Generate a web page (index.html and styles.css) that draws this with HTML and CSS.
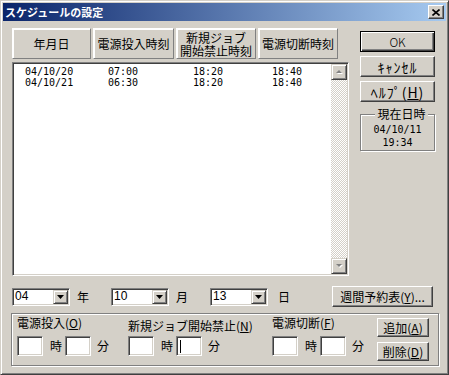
FILE: index.html
```html
<!DOCTYPE html>
<html>

<head>
    <meta charset="utf-8">
    <link rel="stylesheet" href="styles.css">
    <title>スケジュールの設定</title>
</head>

<body>
    <div class="window">
        <div class="titlebar">
            <span class="title">スケジュールの設定</span>
            <div class="close-btn">
                <svg width="8" height="7" viewBox="0 0 8 7">
                    <path d="M0.5 0.5 L7.5 6.5 M7.5 0.5 L0.5 6.5" stroke="#000" stroke-width="1.6" fill="none"/>
                </svg>
            </div>
        </div>

        <div class="dialog">
            <div class="top">
                <div class="left-col">
                    <div class="header">
                        <div class="col-head w1">年月日</div>
                        <div class="col-head w2">電源投入時刻</div>
                        <div class="col-head w3"><span class="head-line">新規ジョブ</span><span class="head-line">開始禁止時刻</span></div>
                        <div class="col-head w4">電源切断時刻</div>
                    </div>

                    <div class="listbox">
                        <div class="rows">
                            <div class="row"><span>04/10/20</span><span>07:00</span><span>18:20</span><span>18:40</span></div>
                            <div class="row"><span>04/10/21</span><span>06:30</span><span>18:20</span><span>18:40</span></div>
                        </div>
                        <div class="scrollbar">
                            <div class="sb-btn">
                                <svg width="9" height="6" viewBox="0 0 9 6">
                                    <polygon points="2,5 5,2 8,5" fill="#fff"/>
                                    <polygon points="1,4 4,1 7,4" fill="#808080"/>
                                </svg>
                            </div>
                            <div class="sb-track"></div>
                            <div class="sb-btn">
                                <svg width="9" height="6" viewBox="0 0 9 6">
                                    <polygon points="2,2 8,2 5,5" fill="#fff"/>
                                    <polygon points="1,1 7,1 4,4" fill="#808080"/>
                                </svg>
                            </div>
                        </div>
                    </div>
                </div>

                <div class="right-col">
                    <div class="btn btn-default">OK</div>
                    <div class="btn kana">ｷｬﾝｾﾙ</div>
                    <div class="btn kana">ﾍﾙﾌﾟ(<u>H</u>)</div>
                    <fieldset class="now-box">
                        <legend>現在日時</legend>
                        <div class="now-text">04/10/11</div>
                        <div class="now-text">19:34</div>
                    </fieldset>
                </div>
            </div>

            <div class="date-row">
                <div class="date-field">
                    <div class="combo"><span class="combo-value">04</span><div class="combo-btn"><svg width="7" height="4" viewBox="0 0 7 4"><polygon points="0,0 7,0 3.5,4" fill="#000"/></svg></div></div>
                    <span class="date-label">年</span>
                </div>
                <div class="date-field">
                    <div class="combo"><span class="combo-value">10</span><div class="combo-btn"><svg width="7" height="4" viewBox="0 0 7 4"><polygon points="0,0 7,0 3.5,4" fill="#000"/></svg></div></div>
                    <span class="date-label">月</span>
                </div>
                <div class="date-field">
                    <div class="combo"><span class="combo-value">13</span><div class="combo-btn"><svg width="7" height="4" viewBox="0 0 7 4"><polygon points="0,0 7,0 3.5,4" fill="#000"/></svg></div></div>
                    <span class="date-label day">日</span>
                </div>
                <div class="btn btn-week">週間予約表(<u>Y</u>)...</div>
            </div>

            <div class="entry-group">
                <div class="entry s1">
                    <div class="entry-label">電源投入(<u>O</u>)</div>
                    <div class="time-row">
                        <div class="field"></div><span class="unit-h">時</span><div class="field"></div><span class="unit-m">分</span>
                    </div>
                </div>
                <div class="entry s2">
                    <div class="entry-label low">新規ジョブ開始禁止(<u>N</u>)</div>
                    <div class="time-row">
                        <div class="field"></div><span class="unit-h">時</span><div class="field"><span class="caret"></span></div><span class="unit-m">分</span>
                    </div>
                </div>
                <div class="entry s3">
                    <div class="entry-label">電源切断(<u>F</u>)</div>
                    <div class="time-row">
                        <div class="field"></div><span class="unit-h">時</span><div class="field"></div><span class="unit-m">分</span>
                    </div>
                </div>
                <div class="entry-buttons">
                    <div class="btn btn-small">追加(<u>A</u>)</div>
                    <div class="btn btn-small">削除(<u>D</u>)</div>
                </div>
            </div>
        </div>
    </div>
</body>

</html>
```

FILE: styles.css
```css
body {
    margin: 0;
    padding: 0;
    font-family: "Noto Sans CJK JP", sans-serif;
    font-size: 12px;
    line-height: 12px;
    color: #000;
    background-color: #d4d0c8;
}

.window {
    width: 449px;
    height: 375px;
    box-sizing: border-box;
    border: 1px solid;
    border-color: #d4d0c8 #404040 #404040 #d4d0c8;
    box-shadow: inset 1px 1px #fff, inset -1px -1px #808080;
    padding: 2px;
    background-color: #d4d0c8;
}

/* title bar */
.titlebar {
    height: 18px;
    display: flex;
    align-items: center;
    padding: 0 2px;
    background: linear-gradient(to right, #0a246a, #a6caf0);
}

.title {
    flex: 1;
    color: #fff;
    font-weight: bold;
    font-size: 11px;
    line-height: 12px;
}

.close-btn {
    width: 16px;
    height: 14px;
    box-sizing: border-box;
    display: flex;
    align-items: center;
    justify-content: center;
    background-color: #d4d0c8;
    border: 1px solid;
    border-color: #fff #404040 #404040 #fff;
    box-shadow: inset -1px -1px #808080;
}

.dialog {
    padding: 7px 0 0 9px;
}

.top {
    display: flex;
}

.left-col {
    width: 337px;
}

/* column headers */
.header {
    display: flex;
    gap: 2px;
    height: 31px;
}

.col-head {
    box-sizing: border-box;
    height: 31px;
    display: flex;
    flex-direction: column;
    align-items: center;
    justify-content: center;
    text-align: center;
    border: 1px solid;
    border-color: #fff #808080 #808080 #fff;
    box-shadow: inset 1px 1px #fff;
}

.head-line {
    display: block;
    height: 13px;
    line-height: 13px;
}

.w1 { width: 79px; }
.w2 { width: 81px; }
.w3 { width: 80px; }
.w4 { width: 80px; }

/* list */
.listbox {
    margin-top: 3px;
    height: 214px;
    box-sizing: border-box;
    display: flex;
    background-color: #fff;
    border: 1px solid;
    border-color: #808080 #fff #fff #808080;
    box-shadow: inset 1px 1px #404040, inset -1px -1px #d4d0c8;
    padding: 1px;
}

.rows {
    flex: 1;
    padding: 2px 0 0 11px;
    font-family: "DejaVu Sans Mono", monospace;
    font-size: 10px;
    line-height: 11px;
}

.row {
    display: grid;
    grid-template-columns: 83px 85px 79px auto;
}

.scrollbar {
    width: 16px;
    display: flex;
    flex-direction: column;
}

.sb-btn {
    width: 16px;
    height: 16px;
    box-sizing: border-box;
    display: flex;
    align-items: center;
    justify-content: center;
    background-color: #d4d0c8;
    border: 1px solid;
    border-color: #d4d0c8 #404040 #404040 #d4d0c8;
    box-shadow: inset 1px 1px #fff, inset -1px -1px #808080;
}

.sb-track {
    flex: 1;
    background: repeating-conic-gradient(#fff 0 25%, #d4d0c8 0 50%) 0 0 / 2px 2px;
}

/* right buttons */
.right-col {
    width: 75px;
    margin-left: 11px;
    padding-top: 3px;
}

.btn {
    box-sizing: border-box;
    height: 21px;
    display: flex;
    align-items: center;
    justify-content: center;
    white-space: nowrap;
    border: 1px solid;
    border-color: #fff #404040 #404040 #fff;
    box-shadow: inset -1px -1px #808080;
    margin-bottom: 4px;
}

.btn-default {
    font-weight: 300;
    border-color: #000;
    box-shadow: inset 1px 1px #fff, inset -1px -1px #404040, inset -2px -2px #808080;
}

.btn.kana {
    font-size: 14px;
    letter-spacing: 1px;
}

.now-box {
    margin: 6px 0 0 0;
    padding: 3px 0 1px 0;
    min-width: 0;
    border: 1px solid #808080;
    box-shadow: inset 1px 1px #fff, 1px 1px #fff;
    text-align: center;
}

.now-box legend {
    margin-left: 4px;
    padding: 0 2px;
    background-color: #d4d0c8;
    line-height: 12px;
}

.now-text {
    font-family: "DejaVu Sans Mono", monospace;
    font-size: 10px;
    line-height: 13px;
}

/* date selectors */
.date-row {
    width: 421px;
    height: 21px;
    margin-top: 10px;
    display: flex;
    align-items: center;
}

.date-field {
    width: 99px;
    display: flex;
    align-items: center;
}

.combo {
    width: 58px;
    height: 18px;
    box-sizing: border-box;
    display: flex;
    align-items: center;
    background-color: #fff;
    border: 1px solid;
    border-color: #808080 #fff #fff #808080;
    box-shadow: inset 1px 1px #404040, inset -1px -1px #d4d0c8;
    padding: 1px;
}

.combo-value {
    flex: 1;
    padding-left: 1px;
    margin-top: -2px;
    font-family: "Liberation Sans", sans-serif;
}

.combo-btn {
    width: 15px;
    height: 14px;
    box-sizing: border-box;
    display: flex;
    align-items: center;
    justify-content: center;
    background-color: #d4d0c8;
    border: 1px solid;
    border-color: #d4d0c8 #404040 #404040 #d4d0c8;
    box-shadow: inset 1px 1px #fff, inset -1px -1px #808080;
}

.date-label {
    margin-left: 7px;
}

.date-label.day {
    margin-left: 10px;
}

.btn-week {
    width: 101px;
    margin: 0 0 0 auto;
}

/* schedule entry */
.entry-group {
    width: 428px;
    height: 53px;
    box-sizing: border-box;
    margin: 6px 0 0 -1px;
    padding: 3px 0 0 5px;
    display: flex;
    border: 1px solid #808080;
    box-shadow: inset 1px 1px #fff, 1px 1px #fff;
}

.entry.s1 { width: 111px; }
.entry.s2 { width: 144px; }
.entry.s3 { width: 105px; }

.entry-label {
    height: 12px;
    white-space: nowrap;
}

.entry-label.low {
    padding-top: 3px;
    height: 9px;
}

.time-row {
    margin-top: 7px;
    display: flex;
    align-items: center;
}

.field {
    width: 26px;
    height: 20px;
    box-sizing: border-box;
    background-color: #fff;
    border: 1px solid;
    border-color: #808080 #fff #fff #808080;
    box-shadow: inset 1px 1px #404040, inset -1px -1px #d4d0c8;
    padding: 3px 0 0 3px;
}

.caret {
    display: block;
    width: 1px;
    height: 13px;
    background-color: #000;
}

.unit-h {
    margin: 0 3px 0 7px;
}

.unit-m {
    margin-left: 6px;
}

.entry-buttons {
    width: 52px;
    padding-top: 1px;
}

.btn-small {
    height: 19px;
    margin-bottom: 5px;
}
```
